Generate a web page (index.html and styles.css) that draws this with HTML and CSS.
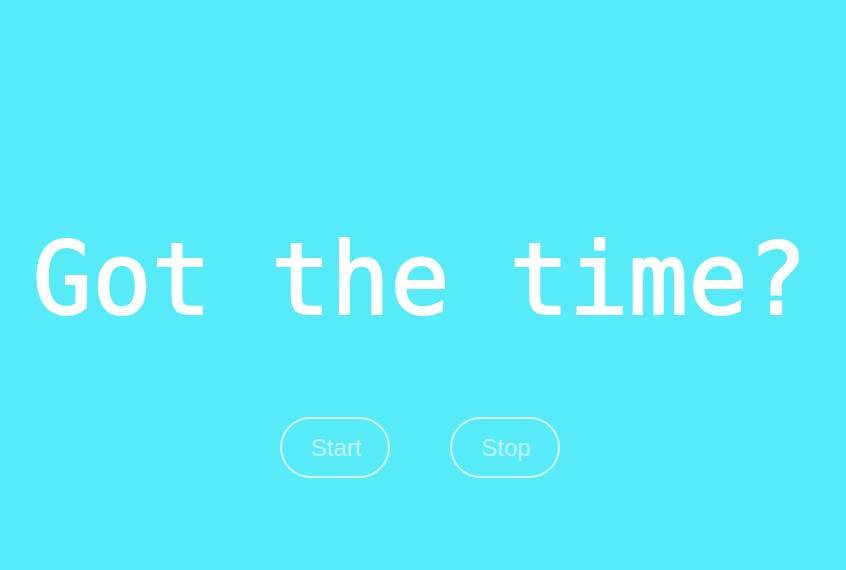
FILE: index.html
```html
<!DOCTYPE html>
<html>
<head>
<meta charset="utf-8">
<link rel="stylesheet" href="styles.css">
</head>
<body>
<main class="page">
  <h1 class="title">Got the time?</h1>
  <div class="controls">
    <button class="btn">Start</button>
    <button class="btn">Stop</button>
  </div>
</main>
</body>
</html>
```
FILE: styles.css
```css
html, body {
  margin: 0;
  padding: 0;
  background: #57eaf8;
  height: 100%;
}
.page {
  display: flex;
  flex-direction: column;
  align-items: center;
  padding-top: 220px;
  padding-right: 6px;
}
.title {
  margin: 0;
  font-family: "DejaVu Sans Mono", monospace;
  font-weight: normal;
  font-size: 99px;
  line-height: 120px;
  color: #ffffff;
  -webkit-text-stroke: 2px #ffffff;
  white-space: nowrap;
}
.controls {
  display: flex;
  gap: 60px;
  margin-top: 77px;
}
.btn {
  width: 110px;
  height: 61px;
  border: 2px solid rgba(255, 255, 255, 0.75);
  border-radius: 31px;
  background: transparent;
  color: rgba(255, 255, 255, 0.65);
  font-family: "Liberation Sans", Arial, sans-serif;
  font-size: 24px;
  padding: 0 0 0 2px;
}
```
